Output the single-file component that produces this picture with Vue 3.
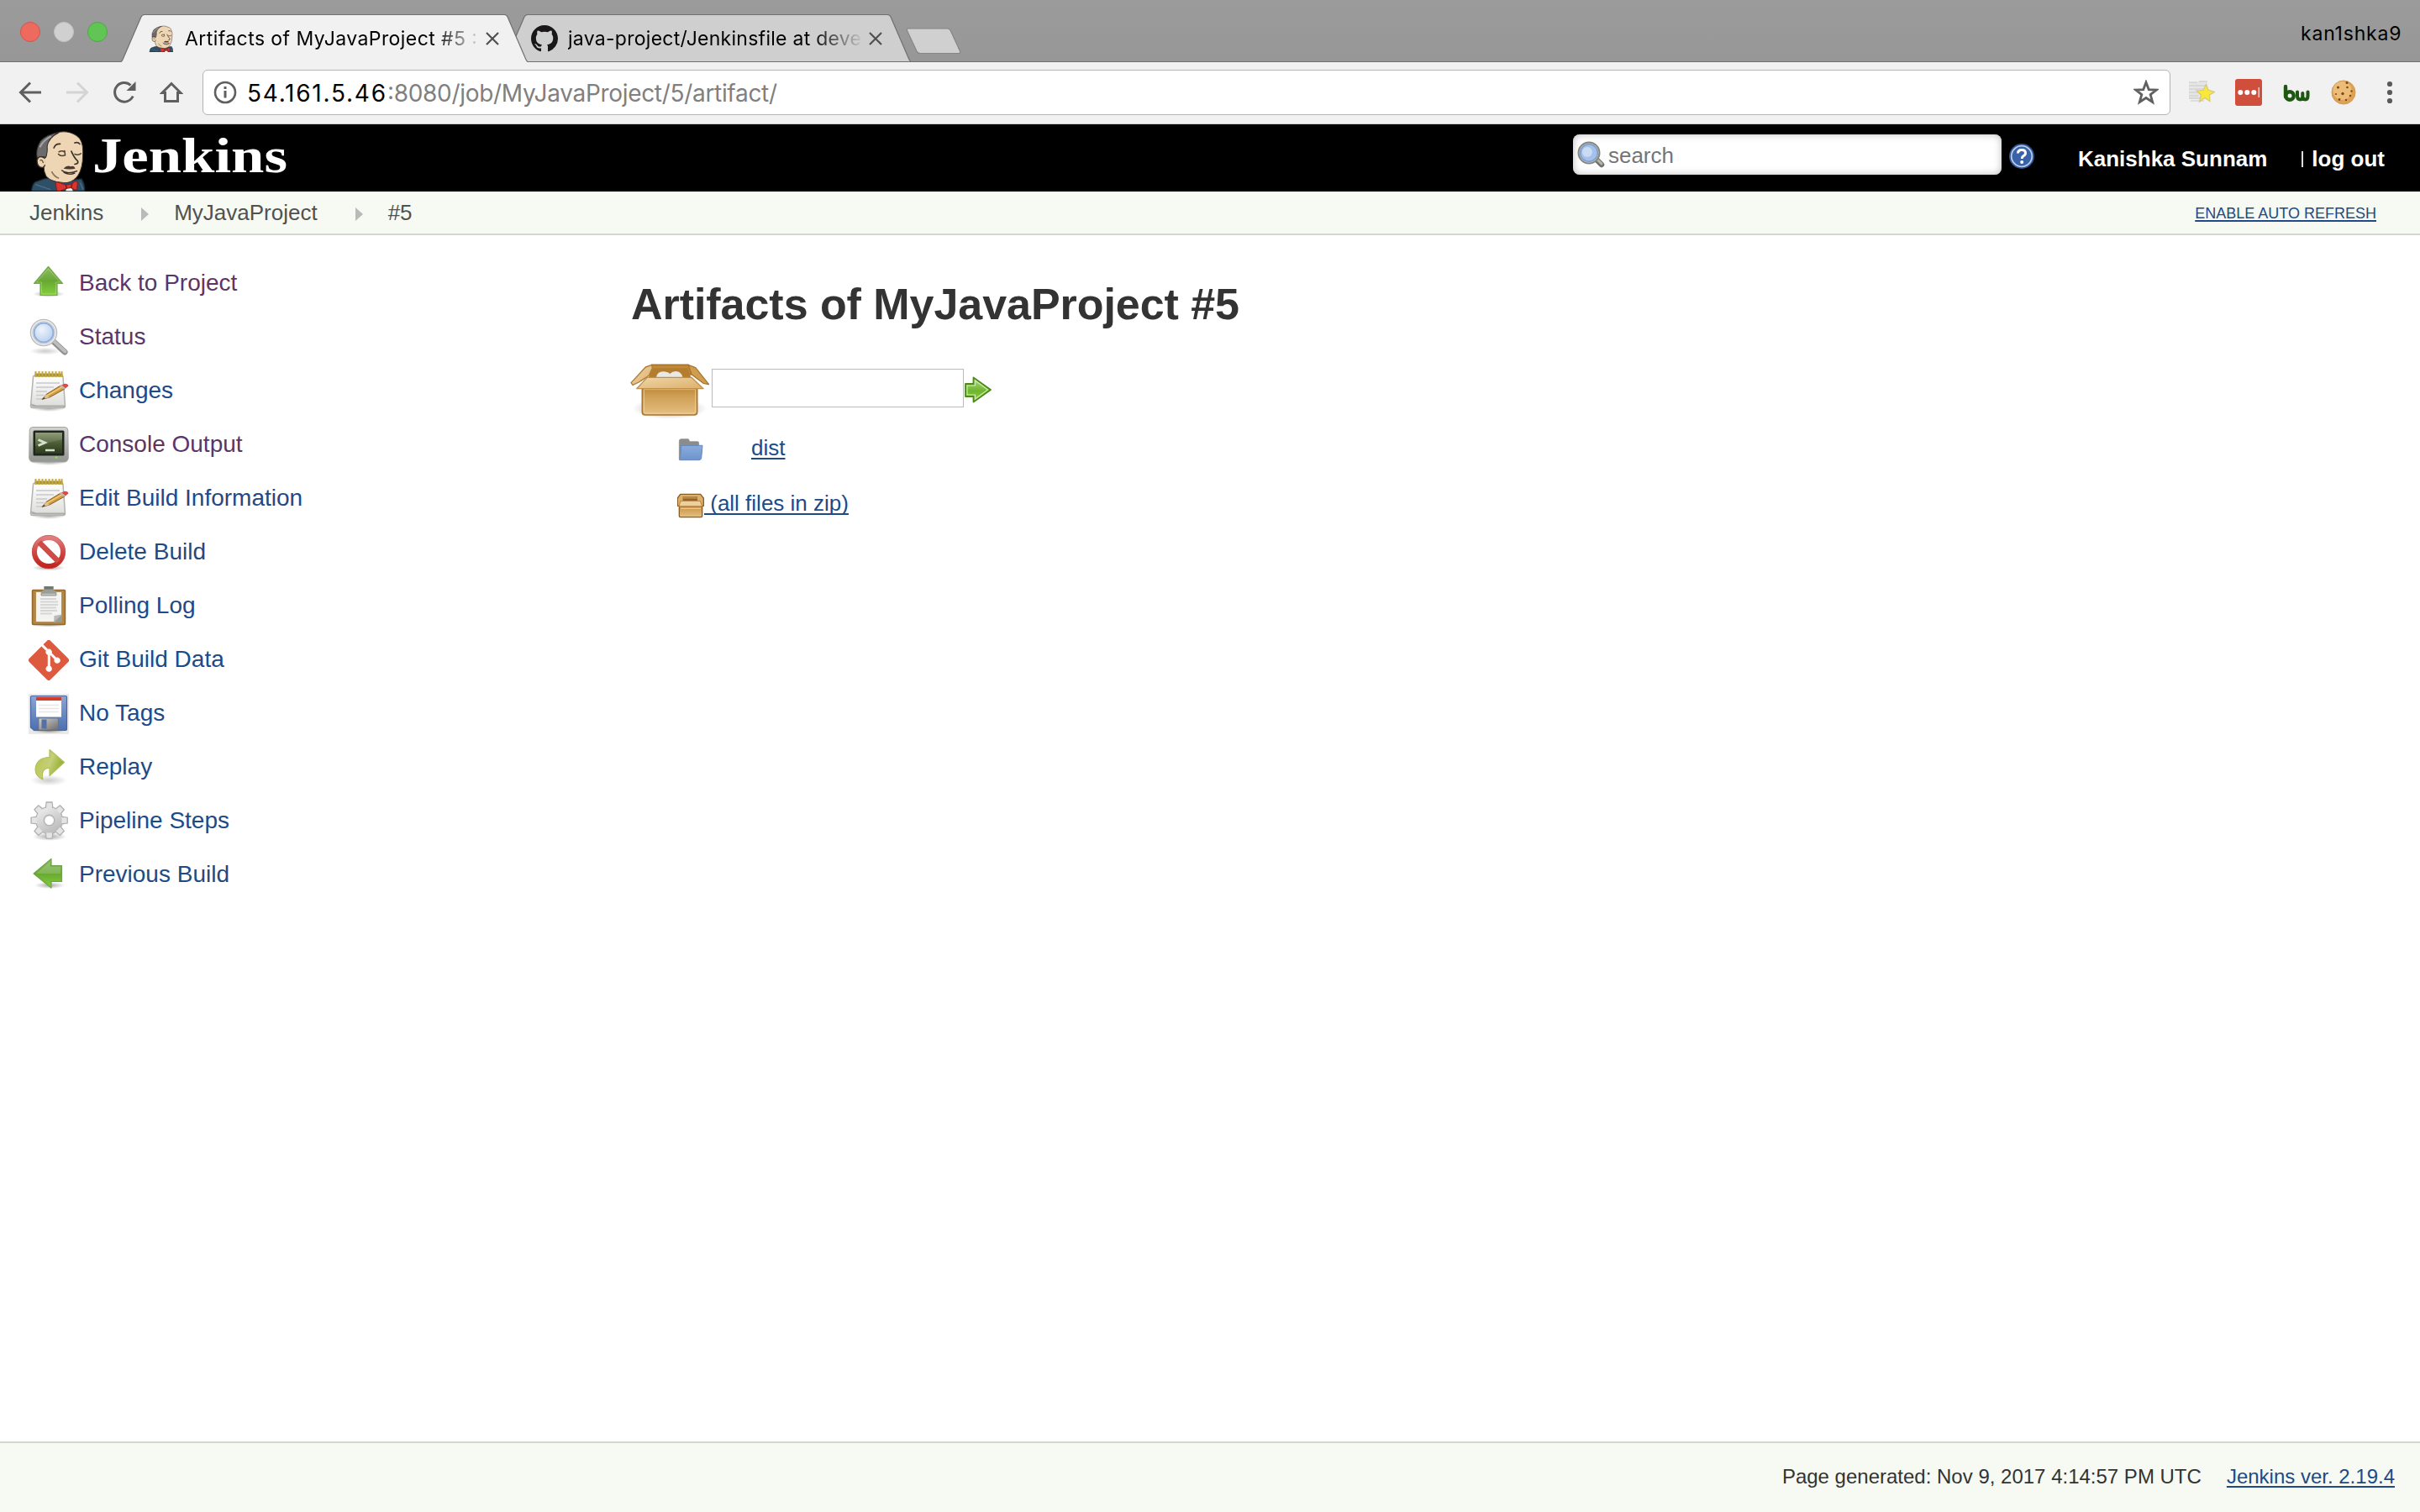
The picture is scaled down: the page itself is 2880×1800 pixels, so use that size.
<script setup>
const tasks = [
  { label: 'Back to Project', icon: 'up', visited: true },
  { label: 'Status', icon: 'search', visited: true },
  { label: 'Changes', icon: 'notepad' },
  { label: 'Console Output', icon: 'terminal', visited: true },
  { label: 'Edit Build Information', icon: 'notepad' },
  { label: 'Delete Build', icon: 'forbid' },
  { label: 'Polling Log', icon: 'clipboard' },
  { label: 'Git Build Data', icon: 'git' },
  { label: 'No Tags', icon: 'floppy' },
  { label: 'Replay', icon: 'redo' },
  { label: 'Pipeline Steps', icon: 'gear' },
  { label: 'Previous Build', icon: 'prev' },
]
const crumbs = ['Jenkins', 'MyJavaProject', '#5']
const teeth = [0, 45, 90, 135, 180, 225, 270, 315]
</script>

<template>
  <div class="window">
    <!-- shared icon definitions -->
    <svg class="defs" width="0" height="0" aria-hidden="true">
      <defs>
        <linearGradient id="gUp" x1="0" y1="0" x2="0" y2="1"><stop offset="0" stop-color="#8cbc6a" /><stop offset=".5" stop-color="#68a832" /><stop offset="1" stop-color="#84cf3c" /></linearGradient>
        <linearGradient id="gGo" x1="0" y1="0" x2="0" y2="1"><stop offset="0" stop-color="#b4d98f" /><stop offset=".55" stop-color="#6fb52d" /><stop offset="1" stop-color="#8fd152" /></linearGradient>
        <linearGradient id="gRedo" x1="0" y1="0" x2="1" y2=".4"><stop offset="0" stop-color="#b9c44c" /><stop offset=".6" stop-color="#c4cf78" /><stop offset="1" stop-color="#8fae2c" /></linearGradient>
        <linearGradient id="gRed" x1="0" y1="0" x2="0" y2="1"><stop offset="0" stop-color="#e08080" /><stop offset=".55" stop-color="#cd4440" /><stop offset="1" stop-color="#c3251f" /></linearGradient>
        <radialGradient id="gLens" cx=".4" cy=".35" r=".75"><stop offset="0" stop-color="#eef4fb" /><stop offset="1" stop-color="#b4ccec" /></radialGradient>
        <linearGradient id="gPaper" x1="0" y1="0" x2="0" y2="1"><stop offset="0" stop-color="#ffffff" /><stop offset="1" stop-color="#dcdcda" /></linearGradient>
        <linearGradient id="gScreen" x1="0" y1="0" x2="0" y2="1"><stop offset="0" stop-color="#83936a" /><stop offset=".5" stop-color="#4d5d36" /><stop offset="1" stop-color="#2d3a20" /></linearGradient>
        <linearGradient id="gBezel" x1="0" y1="0" x2="0" y2="1"><stop offset="0" stop-color="#d2d3d0" /><stop offset="1" stop-color="#92958f" /></linearGradient>
        <linearGradient id="gFloppy" x1="0" y1="0" x2="0" y2="1"><stop offset="0" stop-color="#8ca6d4" /><stop offset="1" stop-color="#4c6fb0" /></linearGradient>
        <linearGradient id="gMetal" x1="0" y1="0" x2="1" y2="1"><stop offset="0" stop-color="#d0d0d0" /><stop offset="1" stop-color="#6c6c6c" /></linearGradient>
        <linearGradient id="gGear" x1="0" y1="0" x2=".6" y2="1"><stop offset="0" stop-color="#f0f0f0" /><stop offset="1" stop-color="#bcbcbc" /></linearGradient>
        <linearGradient id="gBox" x1="0" y1="0" x2="0" y2="1"><stop offset="0" stop-color="#bd8837" /><stop offset=".3" stop-color="#cf9f55" /><stop offset="1" stop-color="#e6bf82" /></linearGradient>
        <linearGradient id="gFlap" x1="0" y1="0" x2="1" y2="1"><stop offset="0" stop-color="#efd6a6" /><stop offset="1" stop-color="#dcb06c" /></linearGradient>
        <linearGradient id="gFolder" x1="0" y1="0" x2="0" y2="1"><stop offset="0" stop-color="#8aacdc" /><stop offset="1" stop-color="#6c94cc" /></linearGradient>
        <radialGradient id="gShadow"><stop offset="0" stop-color="#000" stop-opacity=".34" /><stop offset="1" stop-color="#000" stop-opacity="0" /></radialGradient>

        <symbol id="butler" viewBox="45 35 200 217">
          <path d="M52 252 Q56 224 66 219 L98 208 L130 204 L200 212 L230 208 Q242 226 242 252 Z" fill="#2f4f66" stroke="#1b2a36" stroke-width="4" />
          <path d="M66 228 L120 246 M225 222 L236 246" stroke="#4b6f8a" stroke-width="4" fill="none" />
          <path d="M98 150 Q92 176 104 198 Q122 222 180 222 Q206 216 218 196 Q236 168 235 120 Q238 70 212 54 Q176 32 134 46 Q104 58 96 110 Z" fill="#eed6b5" stroke="#3a302a" stroke-width="3" />
          <path d="M72 134 Q66 104 84 74 Q104 50 150 43 Q112 62 108 92 Q110 116 103 132 Q86 126 72 134 Z" fill="#6d6a6b" stroke="#2b2929" stroke-width="3" />
          <path d="M82 96 Q92 72 122 56" stroke="#a5a3a4" stroke-width="6" fill="none" />
          <path d="M101 136 Q78 120 72 142 Q72 166 88 168 Q98 168 100 158" fill="#eed6b5" stroke="#3a302a" stroke-width="4" />
          <path d="M82 142 Q92 138 94 152" stroke="#6a5340" stroke-width="4" fill="none" />
          <path d="M132 98 Q138 82 154 84 M206 80 Q218 76 224 84" stroke="#3a302a" stroke-width="5" fill="none" stroke-linecap="round" />
          <path d="M148 120 Q156 130 172 124 L170 108 M206 120 Q216 126 228 118 M150 112 Q160 106 170 112" stroke="#4f4136" stroke-width="4.500" fill="none" stroke-linecap="round" />
          <path d="M194 110 Q206 136 216 144 Q222 154 206 156" stroke="#3a302a" stroke-width="5" fill="none" stroke-linecap="round" />
          <path d="M166 172 Q178 158 192 164 Q204 160 208 172 Q190 176 166 172 Z" fill="#4a3a30" />
          <path d="M160 178 Q178 194 214 180 M168 186 Q188 196 206 188" stroke="#3a302a" stroke-width="4" fill="none" stroke-linecap="round" />
          <path d="M124 182 Q132 200 150 206" stroke="#8b745c" stroke-width="5" fill="none" />
          <path d="M174 252 L178 240 L194 240 L200 252 Z" fill="#fff" />
          <path d="M138 222 Q140 218 148 220 L174 230 L196 226 L208 216 Q216 216 216 226 L214 244 Q212 250 204 246 L194 240 L178 242 L152 252 L142 250 Z" fill="#d8352f" stroke="#8b1c1a" stroke-width="3" />
          <path d="M174 230 L178 242 M196 226 L194 240" stroke="#7d1513" stroke-width="4" />
        </symbol>

        <symbol id="up" viewBox="0 0 48 48">
          <ellipse cx="24" cy="36" rx="19" ry="4" fill="url(#gShadow)" />
          <path d="M23.500 3.500 L40.500 23.500 H34 V37.500 H14 V23.500 H6.500 Z" fill="url(#gUp)" stroke="#73ab48" stroke-width="1.200" stroke-linejoin="round" />
          <path d="M23.500 6 L37.500 22 H32.500 V36 H15.500 V22 H9.500 Z" fill="none" stroke="#fff" stroke-opacity=".25" />
        </symbol>
        <symbol id="search" viewBox="0 0 48 48">
          <ellipse cx="20" cy="40" rx="19" ry="4.500" fill="url(#gShadow)" opacity=".6" />
          <path d="M29 28 L43 41" stroke="#8f8f8f" stroke-width="7" stroke-linecap="round" />
          <path d="M30 28 L43.500 40.500" stroke="#bdbdbd" stroke-width="4" stroke-linecap="round" />
          <circle cx="18" cy="18" r="14.500" fill="#fff" stroke="#bbb" stroke-width="3.500" />
          <circle cx="18" cy="18" r="14.200" fill="none" stroke="#eee" stroke-width="1.500" />
          <circle cx="18" cy="18" r="11.500" fill="url(#gLens)" stroke="#8fafdc" stroke-width="2" />
        </symbol>
        <symbol id="notepad" viewBox="0 0 48 48">
          <ellipse cx="24" cy="44" rx="20" ry="4" fill="url(#gShadow)" />
          <path d="M5.500 7 Q5.500 5 8 5 H39 Q41 5 41 7 L43.500 41 Q43.500 43.500 41 43.500 H5 Q2.500 43.500 2.500 41 Z" fill="url(#gPaper)" stroke="#b2b2ae" stroke-width="1.500" />
          <path d="M3 38.500 Q3 42.500 7 42.500 H43 V40.500 H9 Z" fill="#aaa" />
          <path d="M7.500 2.500 H40.500 V6.500 H7.500 Z" fill="#a98f2e" />
          <path d="M8.500 0 V7 M12.500 0 V7 M16.500 0 V7 M20.500 0 V7 M24.500 0 V7 M28.500 0 V7 M32.500 0 V7 M36.500 0 V7 M39.500 0 V7" stroke="#c2a944" stroke-width="2" />
          <path d="M9 14 H37 M9 19 H30 M9 24 H22 M9 28.500 H18 M9 33 H16" stroke="#c9c9c9" stroke-width="1.300" />
          <path d="M16 33.500 L21 27.500 L38 17 L43 21 L25 31 Z" fill="#d59a3c" stroke="#86622c" stroke-width="1" />
          <path d="M22 29 L40 18.600" stroke="#f0cc7b" stroke-width="1.500" />
          <path d="M16 33.500 L21 27.500 L25 31 Z" fill="#dcc49a" />
          <path d="M16 33.500 L18.300 30.900 L20 32.300 Z" fill="#333" />
          <path d="M38 17 L42 15 Q46.500 14 47.500 17.500 L43 21 Z" fill="#dd4a40" />
          <path d="M37 17.600 L39.500 16.200 L44 20.200 L42 21.600 Z" fill="#b9b9b9" />
        </symbol>
        <symbol id="terminal" viewBox="0 0 48 48">
          <ellipse cx="24" cy="44" rx="22" ry="4" fill="url(#gShadow)" />
          <path d="M5 2.500 H43 Q46.500 2.500 46.800 6 L47.300 39 Q47 44 42 44 H6 Q1 44 .7 39 L1.200 6 Q1.500 2.500 5 2.500 Z" fill="url(#gBezel)" stroke="#a3a5a1" />
          <rect x="5.500" y="6.500" width="37" height="30" rx="1.500" fill="#20261c" />
          <rect x="8" y="9" width="32" height="25" fill="url(#gScreen)" />
          <path d="M8 9 H40 V17 L8 25 Z" fill="#fff" opacity=".1" />
          <path d="M11.500 17.500 L19.500 21 L11.500 24.500" stroke="#d5e2cd" stroke-width="2.800" fill="none" />
          <path d="M20 30 H31" stroke="#d5e2cd" stroke-width="2.500" />
          <circle cx="33" cy="38.500" r="1.300" fill="#8ee43c" />
        </symbol>
        <symbol id="forbid" viewBox="0 0 48 48">
          <ellipse cx="24" cy="42" rx="20" ry="3.500" fill="url(#gShadow)" />
          <circle cx="24" cy="23" r="17" fill="none" stroke="url(#gRed)" stroke-width="6" />
          <path d="M12.500 11.500 L35.500 34.500" stroke="#d04b46" stroke-width="6.500" />
          <circle cx="24" cy="23" r="19.700" fill="none" stroke="#c84640" stroke-opacity=".5" />
        </symbol>
        <symbol id="clipboard" viewBox="0 0 48 48">
          <ellipse cx="24" cy="46" rx="20" ry="2.500" fill="url(#gShadow)" />
          <rect x="4.500" y="4.500" width="39" height="41" rx="1" fill="#b5863f" stroke="#93692b" stroke-width="1.500" />
          <path d="M8.500 6.500 H39.500 V42.500 H8.500 Z" fill="#f3f3f1" stroke="#a9834b" stroke-width=".8" />
          <path d="M14 15 H33 M14 18.500 H35 M14 22 H35 M14 25.500 H33 M14 29 H34 M14 32.500 H28" stroke="#d6d6d6" stroke-width="2.200" />
          <path d="M30 42.500 L30.500 35 L39.500 33.500 V35 L33 42.500 Z" fill="#b9bbb7" />
          <path d="M39.500 34 V42.500 H30.500 Z" fill="#999c97" />
          <path d="M14.500 10 Q14.500 4.500 18.500 4.500 V0 H29.500 V4.500 Q33.500 4.500 33.500 10 Q33.500 11.500 32 11.500 H16 Q14.500 11.500 14.500 10 Z" fill="#9c9e98" />
          <path d="M18.500 0 H29.500 V3.500 H18.500 Z" fill="#74776e" />
          <path d="M16 9.500 H32" stroke="#c3c5c0" stroke-width="1.500" />
        </symbol>
        <symbol id="git" viewBox="0 0 92 92">
          <path d="M90.160 41.800 L50.200 1.840 a5.900 5.900 0 0 0-8.340 0 l-8.300 8.300 10.530 10.530 a7 7 0 0 1 8.860 8.930 l10.150 10.150 a7 7 0 1 1-4.200 3.960 L49.430 34.240 v24.930 a7 7 0 1 1-5.770-.21 V33.800 a7 7 0 0 1-3.800-9.190 L29.480 14.220 1.840 41.860 a5.900 5.900 0 0 0 0 8.340 l39.960 39.960 a5.900 5.900 0 0 0 8.340 0 L90.160 50.400 a6.080 6.080 0 0 0 0-8.600" fill="#de5a3f" />
        </symbol>
        <symbol id="floppy" viewBox="0 0 48 48">
          <rect width="48" height="48" fill="#e9e9e9" />
          <ellipse cx="24" cy="44.500" rx="20" ry="2.500" fill="url(#gShadow)" />
          <path d="M4 2.500 H44 Q45.500 2.500 45.500 4 V42 Q45.500 43.500 44 43.500 H6.500 L2.500 40 V4 Q2.500 2.500 4 2.500 Z" fill="url(#gFloppy)" stroke="#4a66a0" stroke-width="1.200" />
          <rect x="9" y="4" width="30" height="23.500" fill="#fff" />
          <rect x="9" y="4" width="30" height="4" fill="#d13f2b" />
          <path d="M12 13.500 H36 M12 17.500 H36 M12 21.500 H36" stroke="#e6e6e6" stroke-width="1.300" />
          <rect x="12" y="29" width="23.500" height="14" fill="url(#gMetal)" stroke="#6b7078" stroke-width=".8" />
          <rect x="15.500" y="30.500" width="6" height="11" fill="#5570a4" />
        </symbol>
        <symbol id="redo" viewBox="0 0 48 48">
          <ellipse cx="24" cy="39" rx="22" ry="6.500" fill="url(#gShadow)" opacity=".6" />
          <path d="M25 2.500 L42.500 17.500 L25 33.500 V24 Q14 25 17 38 Q8 34 8 26 Q9 12 25 11.500 Z" fill="url(#gRedo)" stroke="#b2bf55" stroke-width="1.200" stroke-linejoin="round" />
        </symbol>
        <symbol id="gear" viewBox="0 0 48 48">
          <ellipse cx="25" cy="42" rx="20" ry="5" fill="url(#gShadow)" />
          <g stroke="#b0b0b0" stroke-width="1.300" fill="#dedede">
            <path v-for="a in teeth" :key="a" d="M20 10 L21.200 1 H28 L29.200 10 Z" :transform="`rotate(${a} 24.600 22.600)`" />
          </g>
          <circle cx="24.600" cy="22.600" r="16" fill="url(#gGear)" stroke="#b2b2b2" stroke-width="1.200" />
          <g fill="#e4e4e4">
            <path v-for="a in teeth" :key="a" d="M20.800 12 L21.800 2 H27.400 L28.400 12 Z" :transform="`rotate(${a} 24.600 22.600)`" />
          </g>
          <circle cx="24.600" cy="22.600" r="15" fill="url(#gGear)" />
          <circle cx="24.600" cy="22.600" r="6.200" fill="#fff" stroke="#b5b5b5" stroke-width="1.600" />
        </symbol>
        <symbol id="prev" viewBox="0 0 48 48">
          <ellipse cx="25" cy="36" rx="18" ry="4" fill="url(#gShadow)" />
          <path d="M6 22 L27 4.500 V12.500 H39.500 V31.500 H27 V39 Z" fill="url(#gUp)" stroke="#6fa547" stroke-width="1.200" stroke-linejoin="round" />
          <path d="M9 22 L25.500 8 V14 H38 V22 Z" fill="#fff" opacity=".16" />
        </symbol>
      </defs>
    </svg>

    <!-- browser tab strip -->
    <div class="tabstrip">
      <div class="lights"><i class="red"></i><i class="idle"></i><i class="green"></i></div>
      <div class="tabs">
        <div class="tab active">
          <svg class="shape" viewBox="0 0 484 57"><path d="M0 57 Q1 56.500 2 54 L24 3 Q25.500 .5 28 .5 H456 Q459 .5 460 3 L482 54 Q483 56.500 484 57 Z" fill="#f1f1f1" /><path d="M0 56.500 Q1 56 2 54 L24 3 Q25.500 .5 28 .5 H456 Q459 .5 460 3 L482 54 Q483 56 484 56.500" fill="none" stroke="#6f6f6f" stroke-width="1.200" /></svg>
          <svg class="fav butler" viewBox="0 0 200 217"><use href="#butler" width="200" height="217" /></svg>
          <svg class="title t1" width="350" height="40"><text x="0" y="28.500" textLength="348">Artifacts of MyJavaProject #5 :</text></svg>
          <svg class="close" viewBox="0 0 16 16"><path d="M1 1 L15 15 M15 1 L1 15" /></svg>
        </div>
        <div class="tab">
          <svg class="shape" viewBox="0 0 484 57"><path d="M0 57 L2 54 L24 3 Q25.500 .5 28 .5 H456 Q459 .5 460 3 L482 54 L484 57 Z" fill="#cfcfcf" /><path d="M0 56.500 L2 54 L24 3 Q25.500 .5 28 .5 H456 Q459 .5 460 3 L482 54 L484 56.500 Z" fill="none" stroke="#6f6f6f" stroke-width="1.200" /></svg>
          <svg class="fav github" viewBox="0 0 16 16"><path fill="#191717" fill-rule="evenodd" d="M8 0C3.580 0 0 3.580 0 8c0 3.540 2.290 6.530 5.470 7.590.4.070.55-.17.55-.38 0-.19-.01-.82-.01-1.490-2.010.37-2.530-.49-2.690-.94-.09-.23-.48-.94-.82-1.130-.28-.15-.68-.52-.01-.53.630-.01 1.080.58 1.230.82.720 1.210 1.870.87 2.330.66.070-.52.280-.87.510-1.070-1.780-.2-3.640-.89-3.640-3.950 0-.87.310-1.590.820-2.150-.08-.2-.36-1.020.080-2.120 0 0 .67-.21 2.200.82.640-.18 1.320-.27 2-.27s1.360.090 2 .27c1.530-1.040 2.200-.82 2.200-.82.440 1.100.16 1.920.080 2.120.510.560.820 1.270.820 2.150 0 3.070-1.870 3.750-3.650 3.950.290.250.540.730.540 1.480 0 1.070-.01 1.930-.01 2.200 0 .21.150.46.550.38A8.010 8.010 0 0 0 16 8c0-4.420-3.580-8-8-8z" /></svg>
          <svg class="title t2" width="350" height="40"><text x="0" y="28.500" textLength="349">java-project/Jenkinsfile at deve</text></svg>
          <svg class="close" viewBox="0 0 16 16"><path d="M1 1 L15 15 M15 1 L1 15" /></svg>
        </div>
      </div>
      <svg class="newtab" width="68" height="34"><path d="M3.500 .8 H49 Q52 .8 53 3 L64.500 28 Q65.500 30.500 62.500 30.500 H17 Q14 30.500 13 28 L1.300 3 Q.5 .8 3.500 .8 Z" fill="#d0d0d0" stroke="#868686" stroke-width="1.200" /></svg>
      <svg class="profile" width="120" height="40"><text x="0" y="28" textLength="119.500">kan1shka9</text></svg>
    </div>

    <!-- browser toolbar -->
    <div class="toolbar">
      <svg class="tool" viewBox="0 0 28 28"><path d="M27 14 H3 M14 2.500 L2.500 14 L14 25.500" fill="none" stroke="#5f5f5f" stroke-width="3" /></svg>
      <svg class="tool" viewBox="0 0 28 28"><path d="M1 14 H25 M14 2.500 L25.500 14 L14 25.500" fill="none" stroke="#d4d4d4" stroke-width="3" /></svg>
      <svg class="tool" viewBox="0 0 28 28"><path d="M24.200 18.500 A11.300 11.300 0 1 1 21.500 5.500" fill="none" stroke="#5f5f5f" stroke-width="3" /><path d="M27.500 1 V12 H16.500 Z" fill="#5f5f5f" /></svg>
      <svg class="tool" viewBox="0 0 28 28"><path d="M3 14.500 L14 3.500 L25 14.500 H21.500 V24.500 H6.500 V14.500 Z" fill="none" stroke="#5f5f5f" stroke-width="3" /></svg>
      <div class="omnibox">
        <svg class="info" viewBox="0 0 28 28"><circle cx="14" cy="14" r="12" fill="none" stroke="#5f5f5f" stroke-width="2.600" /><path d="M14 12 V20.500 M14 7 V10" stroke="#5f5f5f" stroke-width="3" /></svg>
        <svg class="url" width="640" height="40"><text x="0" y="30.500" textLength="165">54.161.5.46</text><text x="167" y="30.500" textLength="464" fill="#808080">:8080/job/MyJavaProject/5/artifact/</text></svg>
        <svg class="star" viewBox="0 0 30 30"><path d="M15 3 L18.200 11.600 L27.300 12 L20.200 17.600 L22.700 26.500 L15 21.500 L7.300 26.500 L9.800 17.600 L2.700 12 L11.800 11.600 Z" fill="none" stroke="#5f6061" stroke-width="2.800" /></svg>
      </div>
      <div class="extensions">
        <svg width="32" height="32" viewBox="0 0 32 32">
          <path d="M1 4 H12 V2.500 H23 V24 H1 Z" fill="#e6e6e6" /><path d="M1 4 H11 M13 3 H23 M1 8 H22 M1 12 H20 M1 16 H12 M1 20 H12 M1 23 H14 M3 26 H19" stroke="#cacaca" stroke-width="1.200" />
          <path d="M21.500 6.500 L24 13 L31.500 15.500 L25.500 19 L26 26.500 L20 22.500 L13.500 27 L15.500 19 L10 14 L18 13.500 Z" fill="#f8e83a" stroke="#d6c680" stroke-width="1.200" />
        </svg>
        <svg width="32" height="32" viewBox="0 0 32 32"><rect width="32" height="32" rx="3" fill="#cf4e3c" /><circle cx="6.300" cy="16" r="3" fill="#fff" /><circle cx="14.300" cy="16" r="3" fill="#fff" /><circle cx="22.300" cy="16" r="3" fill="#fff" /><rect x="27.500" y="10" width="1.500" height="12" fill="#f3cdc7" /></svg>
        <svg width="32" height="32" viewBox="0 0 32 32"><g fill="none" stroke="#1f5612" stroke-width="4.400" stroke-linecap="round" stroke-linejoin="round"><path d="M3 9 V21" /><circle cx="8" cy="20" r="4.700" /><path d="M17 15.500 V20 Q17 24.500 20.500 24.500 Q23.300 24.500 23.300 20 V17 M23.300 20 Q23.300 24.500 26.500 24.500 Q29.500 24.500 29.500 20 V15.500" stroke-width="4" /></g></svg>
        <svg width="32" height="32" viewBox="0 0 32 32">
          <circle cx="16" cy="16" r="14" fill="#dfa253" stroke="#d09a58" /><circle cx="14.500" cy="14" r="11" fill="#f0c482" opacity=".8" />
          <g fill="#7c4a22"><circle cx="9.500" cy="10" r="1.600" /><circle cx="20" cy="4.500" r="1.500" /><circle cx="20.500" cy="10" r="1.300" /><circle cx="15" cy="17.500" r="1.700" /><circle cx="7" cy="18" r="1.100" /><circle cx="25.500" cy="14.500" r="1.200" /><circle cx="24" cy="20" r="1.300" /><circle cx="11" cy="24.500" r="1.400" /><circle cx="19" cy="25" r="1.200" /></g>
        </svg>
      </div>
      <svg class="menu" width="8" height="28"><circle cx="4" cy="4" r="3.100" /><circle cx="4" cy="14" r="3.100" /><circle cx="4" cy="24" r="3.100" /></svg>
    </div>

    <!-- Jenkins header -->
    <header class="header">
      <svg class="logo" viewBox="0 0 200 217"><use href="#butler" width="200" height="217" /></svg>
      <svg class="wordmark" width="240" height="60"><text x="4" y="49" textLength="232" lengthAdjust="spacingAndGlyphs">Jenkins</text></svg>
      <div class="searchbox">
        <svg viewBox="0 0 34 34">
          <path d="M24 23 L30 29" stroke="#6f6f6c" stroke-width="6.500" stroke-linecap="round" /><path d="M25 23 L30 28" stroke="#b5b5b0" stroke-width="3" stroke-linecap="round" />
          <circle cx="15" cy="15" r="12.500" fill="#cfd0cd" stroke="#84857f" stroke-width="2" /><circle cx="15" cy="15" r="10.300" fill="#a3c1ea" stroke="#7c9ccb" stroke-width="1.500" /><circle cx="13" cy="14" r="6" fill="#c9dcf3" />
        </svg>
        <span>search</span>
      </div>
      <svg class="help" viewBox="0 0 32 32"><circle cx="16" cy="16" r="15" fill="#2f5596" /><circle cx="16" cy="16" r="12.300" fill="#3a62a8" stroke="#b9cae6" stroke-width="1.800" /><path d="M11.500 12.500 Q11.500 8.500 16 8.500 Q20.500 8.500 20.500 12.300 Q20.500 14.500 17.800 15.800 Q16.300 16.600 16.300 19" fill="none" stroke="#fff" stroke-width="3" /><circle cx="16.200" cy="23" r="2" fill="#fff" /></svg>
      <a class="user">Kanishka Sunnam</a>
      <i class="bar"></i>
      <a class="logout">log out</a>
    </header>

    <nav class="breadcrumbs">
      <template v-for="(c, i) in crumbs" :key="c">
        <svg v-if="i" class="sep" viewBox="0 0 9 16"><path d="M0 0 L9 8 L0 16 Z" /></svg>
        <a>{{ c }}</a>
      </template>
      <a class="refresh">ENABLE AUTO REFRESH</a>
    </nav>

    <div class="body">
      <aside class="side">
        <a v-for="t in tasks" :key="t.label" class="task" :class="{ visited: t.visited }">
          <svg class="ticon" viewBox="0 0 48 48"><use :href="'#' + t.icon" width="48" height="48" /></svg>
          <span>{{ t.label }}</span>
        </a>
      </aside>

      <main class="main">
        <h1>Artifacts of MyJavaProject #5</h1>
        <div class="path">
          <svg class="crate" viewBox="15 21 282 204">
            <ellipse cx="156" cy="184" rx="134" ry="38" fill="url(#gShadow)" />
            <path d="M92 28 H222 L252 62 H60 Z" fill="#c08a3c" stroke="#a9752e" stroke-width="5" stroke-linejoin="round" />
            <path d="M98 40 H220 L232 72 H80 Z" fill="#b47c2d" />
            <path d="M108 72 Q112 50 136 52 Q152 54 156 60 Q172 46 190 54 Q202 62 202 74 Z" fill="#e8e8e6" />
            <path d="M58 110 H254 V196 Q254 207 243 207 H69 Q58 207 58 196 Z" fill="url(#gBox)" stroke="#a9762f" stroke-width="5" />
            <path d="M64 116 H248 V193 Q248 201 240 201 H72 Q64 201 64 193 Z" fill="none" stroke="#f3d9a6" stroke-width="3" opacity=".7" />
            <path d="M92 28 L70 36 L18 92 L24 100 L46 90 L82 66 L94 40 Z" fill="url(#gFlap)" stroke="#ad7b34" stroke-width="4" stroke-linejoin="round" />
            <path d="M222 28 L248 38 L296 98 L276 94 L234 62 Z" fill="#cf9c50" stroke="#a9762f" stroke-width="4" stroke-linejoin="round" />
            <path d="M76 73 H234 L276 113 H38 Z" fill="url(#gFlap)" stroke="#c0904a" stroke-width="4" stroke-linejoin="round" />
          </svg>
          <input class="pathbox" type="text" />
          <svg class="go" viewBox="0 0 32 32"><path d="M1 9 H10.500 V1.500 L31 16 L10.500 30.500 V24 H1 Z" fill="url(#gGo)" stroke="#4c8a1c" stroke-width="1.800" stroke-linejoin="round" /><path d="M3 11 H12.500 V5 L27.500 16 L12.500 27 V22 H3 Z" fill="none" stroke="#cdeaa8" stroke-width="1.200" /></svg>
        </div>
        <div class="file">
          <svg class="small" viewBox="183 288 96 96">
            <path d="M190 366 V300 Q190 293 197 293 H222 Q226 293 226 302 H256 Q260 302 260 308 V330 H200 Z" fill="#8b8d8b" stroke="#858585" stroke-width="2" />
            <path d="M197 316 H273 L269 361 Q268 368 260 368 H191 Q194 362 194 356 Z" fill="url(#gFolder)" stroke="#6187c2" stroke-width="3" />
          </svg>
          <a class="name">dist</a>
        </div>
        <div class="zip">
          <svg class="small" viewBox="183 480 96 96">
            <path d="M194 490 H266 L277 504 V532 H184 V504 Z" fill="#dcb06c" stroke="#8a5f24" stroke-width="4" stroke-linejoin="round" />
            <path d="M203 499 H255 V514 H203 Z" fill="#8f6327" /><path d="M206 499 H252 L256 506 H202 Z" fill="#b98a43" />
            <path d="M190 532 H272 V568 Q272 572 268 572 H194 Q190 572 190 568 Z" fill="url(#gBox)" stroke="#8a5f24" stroke-width="4" />
            <path d="M195 514 H265 L272 533 H189 Z" fill="#ecd0a0" stroke="#b58441" stroke-width="3" />
            <path d="M195 541 H267" stroke="#f0d7a8" stroke-width="3" />
          </svg><a>&nbsp;(all files in zip)</a>
        </div>
      </main>
    </div>

    <footer class="footer">
      <span>Page generated: Nov 9, 2017 4:14:57 PM UTC</span>
      <a>Jenkins ver. 2.19.4</a>
    </footer>
  </div>
</template>

<style>
body { background: #fff; }
</style>

<style scoped>
.window {
  width: 2880px;
  height: 1800px;
  display: flex;
  flex-direction: column;
  overflow: hidden;
  background: #fff;
  font-family: "Liberation Sans", Arial, sans-serif;
  color: #333;
}
.defs { position: absolute; }
svg { display: block; flex: none; }
svg text { font-family: Inter, sans-serif; white-space: pre; }
a { text-decoration-skip-ink: none; text-decoration-thickness: 2px; white-space: nowrap; }

.tabstrip {
  box-sizing: border-box;
  flex: none;
  height: 74px;
  display: flex;
  align-items: flex-start;
  background: linear-gradient(#9b9b9b, #979797);
  box-shadow: inset 0 -1px 0 #6f6f6f;
}
.lights { display: flex; gap: 16px; padding: 26px 16px 0 24px; }
.lights i { box-sizing: border-box; width: 24px; height: 24px; border-radius: 50%; }
.lights .red { background: #ee6a5f; border: 1px solid #d5554b; }
.lights .idle { background: #d0d0d0; border: 1px solid #c2c2c2; }
.lights .green { background: #61c555; border: 1px solid #4fa843; }
.tabs { display: flex; padding: 17px 0 0 0; }
.tab {
  position: relative;
  box-sizing: border-box;
  width: 484px;
  height: 57px;
  display: flex;
  align-items: flex-start;
}
.tab.active { z-index: 2; }
.tab:last-child { margin-left: -28px; }
.shape { position: absolute; left: 0; top: 0; width: 484px; height: 57px; }
.fav, .title, .close { position: relative; }
.fav.butler { width: 29.400px; height: 32px; margin: 13px 0 0 33px; }
.fav.github { width: 32px; height: 32px; margin: 13px 0 0 32px; }
.title { margin-top: 8px; overflow: visible; }
.title text { font-size: 23px; }
.t1 { margin-left: 13.600px; -webkit-mask-image: linear-gradient(90deg, #000 295px, transparent 355px); mask-image: linear-gradient(90deg, #000 295px, transparent 355px); }
.t2 { margin-left: 12px; -webkit-mask-image: linear-gradient(90deg, #000 290px, transparent 352px); mask-image: linear-gradient(90deg, #000 290px, transparent 352px); }
.close { width: 16px; height: 16px; margin: 21px 0 0 8px; }
.close path { stroke: #505050; stroke-width: 2.200; fill: none; }
.newtab { margin: 33px 0 0 -6px; }
.profile { margin: 20px 0 0 auto; padding-right: 22px; }
.profile text { font-size: 23px; }

.toolbar {
  box-sizing: border-box;
  flex: none;
  height: 74px;
  display: flex;
  align-items: center;
  padding: 0 32px 1px 22px;
  background: #f1f1f1;
  border-bottom: 1px solid #cfcfcf;
}
.tool { width: 28px; height: 28px; margin-right: 28px; }
.tool:nth-child(4) { margin-right: 23px; }
.omnibox {
  box-sizing: border-box;
  width: 2342px;
  height: 54px;
  display: flex;
  align-items: center;
  background: #fff;
  border: 1px solid #b4b4b4;
  border-radius: 6px;
}
.info { width: 28px; height: 28px; margin-left: 12px; }
.url { margin-left: 12px; }
.url text { font-size: 28px; }
.star { width: 30px; height: 30px; margin: 0 13px 0 auto; }
.extensions { display: flex; gap: 24.500px; margin-left: 20.500px; }
.menu { margin-left: auto; fill: #5a5a5a; }

.header {
  flex: none;
  height: 80px;
  display: flex;
  align-items: flex-start;
  padding-right: 42px;
  background: #000;
}
.logo { width: 67px; height: 72.600px; margin: 7.400px 0 0 35px; }
.wordmark { margin: 8px 0 0 4px; overflow: visible; }
.wordmark text { font-family: "Liberation Serif", serif; font-weight: 700; font-size: 59px; fill: #fff; }
.searchbox {
  box-sizing: border-box;
  width: 510px;
  height: 48px;
  margin: 12px 0 0 auto;
  display: flex;
  align-items: flex-start;
  padding: 7px 0 0 4px;
  background: #fff;
  border-radius: 8px;
  box-shadow: inset 0 0 10px #bbb;
  font-size: 26px;
  line-height: 30px;
  color: #757575;
}
.searchbox svg { width: 34px; height: 34px; }
.searchbox span { padding: 3px 0 0 4px; }
.help { width: 32px; height: 32px; margin: 22px 0 0 8px; }
.user, .logout { font-size: 26px; line-height: 30px; font-weight: 700; color: #fff; margin-top: 26px; }
.user { margin-left: 51px; }
.bar { width: 2px; height: 19px; margin: 32px 10px 0 41px; background: #ddd; }

.breadcrumbs {
  box-sizing: border-box;
  flex: none;
  height: 52px;
  display: flex;
  align-items: center;
  padding: 0 52px 0 35px;
  background: #f6faf2;
  border-bottom: 2px solid #d3d7cf;
  font-size: 26px;
  line-height: 30px;
  color: #505250;
}
.sep { width: 9px; height: 16px; margin: 4px 30px 0 45px; fill: #bababa; }
.refresh { margin: 2px 0 0 auto; font-size: 18px; line-height: 20px; color: #204a87; text-decoration-line: underline; text-underline-offset: 2px; }

.body { flex: 1; display: flex; }
.side { width: 716px; padding: 34px 0 0 34px; display: flex; flex-direction: column; gap: 16px; }
.task { display: flex; align-items: center; height: 48px; gap: 12px; font-size: 28px; color: #204a87; }
.task.visited { color: #5c3566; }
.task span { padding-bottom: 2px; }
.ticon { width: 48px; height: 48px; }

.main { padding-top: 52px; }
h1 { margin: 0 0 40px 1px; font-size: 52px; line-height: 60px; font-weight: 700; color: #333; letter-spacing: -0.050px; }
.path { display: flex; align-items: flex-start; height: 68px; }
.crate { width: 94px; height: 68px; }
.pathbox { box-sizing: border-box; width: 300px; height: 46px; margin: 7px 0 0 3px; padding: 0; border: 1px solid #bbb; background: #fff; }
.go { width: 32px; height: 32px; margin: 16px 0 0 1px; }
.file, .zip { display: flex; align-items: center; height: 32px; padding-left: 56px; font-size: 26px; line-height: 30px; }
.file { margin-top: 21px; }
.zip { margin-top: 32px; }
.small { width: 32px; height: 32px; }
.file a, .zip a { color: #204a87; text-decoration-line: underline; text-underline-offset: 3px; }
.name { margin: 0 0 8px 56px; }
.zip a { margin-bottom: 4px; }

.footer {
  box-sizing: border-box;
  flex: none;
  height: 84px;
  display: flex;
  justify-content: flex-end;
  gap: 30px;
  padding: 26px 30px 0 0;
  border-top: 2px solid #d3d7cf;
  background: #f6faf2;
  font-size: 24px;
  line-height: 28px;
}
.footer a { color: #204a87; text-decoration-line: underline; text-underline-offset: 3px; }
</style>
